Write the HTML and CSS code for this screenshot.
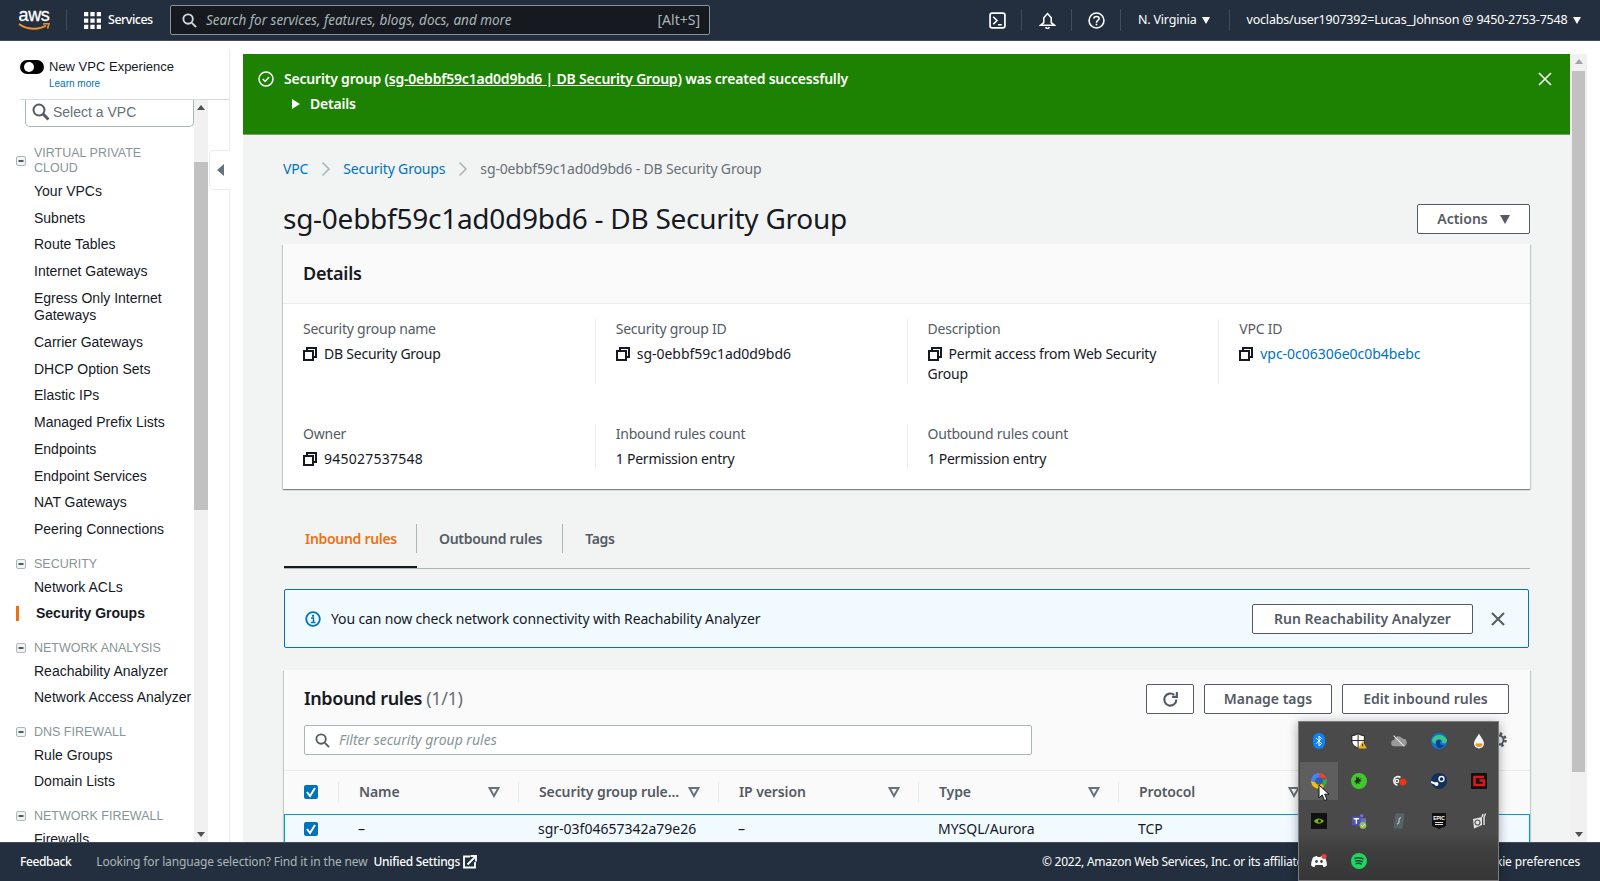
FILE: index.html
```html
<!DOCTYPE html>
<html lang="en">
<head>
<meta charset="utf-8">
<title>sg-0ebbf59c1ad0d9bd6 - DB Security Group</title>
<link rel="stylesheet" href="styles.css">
</head>
<body>
<svg class="defs" width="0" height="0" aria-hidden="true">
  <symbol id="copy" viewBox="0 0 14 14"><path d="M4 3.8V1h9v9h-3M1 4h9v9H1z" fill="#fff" stroke="#16191f" stroke-width="2"/></symbol>
  <symbol id="filter" viewBox="0 0 12 12"><path d="M1.5 2h9L6 10z" fill="none" stroke="#687078" stroke-width="2"/></symbol>
  <symbol id="minus" viewBox="0 0 10 10"><rect x=".5" y=".5" width="9" height="9" rx="1.5" fill="#f2f3f3" stroke="#aab7b8"/><rect x="2.5" y="4" width="5" height="2" fill="#545b64"/></symbol>
  <symbol id="check" viewBox="0 0 14 14"><rect width="14" height="14" rx="2" fill="#0073bb"/><path d="M3 7l3 4 5-8" fill="none" stroke="#fff" stroke-width="2"/></symbol>
  <symbol id="chev" viewBox="0 0 10 16"><path d="M1.5 1.5L8 8l-6.500 6.500" fill="none" stroke="#aab7b8" stroke-width="1.600"/></symbol>
</svg>

<header class="topbar">
  <div class="logo">
    <span class="logo-text">aws</span>
    <svg class="logo-smile" viewBox="0 0 32 8"><path d="M1 1c8 6 20 6 27 1.500" fill="none" stroke="#ec912d" stroke-width="2"/><path d="M25 1l6-.5-1.500 5" fill="none" stroke="#ec912d" stroke-width="1.600"/></svg>
  </div>
  <span class="top-div logo-div"></span>
  <svg class="grid-ico" viewBox="0 0 16 16"><path d="M0 0h4v4H0zM6 0h4v4H6zM12 0h4v4h-4zM0 6h4v4H0zM6 6h4v4H6zM12 6h4v4h-4zM0 12h4v4H0zM6 12h4v4H6zM12 12h4v4h-4z" fill="#fff"/></svg>
  <span class="services">Services</span>
  <div class="search">
    <svg class="search-ico" viewBox="0 0 16 16"><circle cx="6.500" cy="6.500" r="5" fill="none" stroke="#d5dbdb" stroke-width="2"/><path d="M10.500 10.500L15 15" stroke="#d5dbdb" stroke-width="2"/></svg>
    <span class="search-text">Search for services, features, blogs, docs, and more</span>
    <span class="search-key">[Alt+S]</span>
  </div>
  <svg class="top-ico term" viewBox="0 0 16 16"><rect x="1" y="1" width="14" height="14" rx="2" fill="none" stroke="#fff" stroke-width="1.600"/><path d="M4 4.500L7.500 8 4 11.500M8.500 12H12" fill="none" stroke="#fff" stroke-width="1.500"/></svg>
  <span class="top-div d1"></span>
  <svg class="top-ico bell" viewBox="0 0 16 16"><path d="M8 1.500L11.500 5.500V10L14.500 12.500H1.500L4.500 10V5.500z" fill="none" stroke="#fff" stroke-width="1.500"/><path d="M6.500 14a1.500 1.500 0 0 0 3 0" fill="none" stroke="#fff" stroke-width="1.500"/></svg>
  <span class="top-div d2"></span>
  <svg class="top-ico help" viewBox="0 0 16 16"><circle cx="8" cy="8" r="7" fill="none" stroke="#fff" stroke-width="1.500"/><path d="M5.500 6.200C5.500 3.500 10.500 3.500 10.500 6.200 10.500 8 8 8 8 10" fill="none" stroke="#fff" stroke-width="1.500"/><rect x="7.200" y="11" width="1.600" height="1.600" fill="#fff"/></svg>
  <span class="top-div d3"></span>
  <span class="region">N. Virginia</span><span class="tri-w region-tri"></span>
  <span class="top-div d4"></span>
  <span class="user">voclabs/user1907392=Lucas_Johnson @ 9450-2753-7548</span><span class="tri-w user-tri"></span>
</header>

<div class="body">
  <aside class="side">
    <div class="side-top">
      <span class="toggle"><i></i></span>
      <div>
        <div class="exp">New VPC Experience</div>
        <a class="learn">Learn more</a>
      </div>
    </div>
    <div class="nav-row">
      <div class="nav-col">
        <div class="vpc-box">
          <svg class="vpc-ico" viewBox="0 0 18 18"><circle cx="7" cy="7" r="5.500" fill="none" stroke="#545b64" stroke-width="2"/><path d="M11 11l5.500 5.500" stroke="#545b64" stroke-width="3"/></svg>
          <span>Select a VPC</span>
        </div>
        <section class="sec first">
          <div class="sec-head"><svg class="minus"><use href="#minus"/></svg><span>VIRTUAL PRIVATE CLOUD</span></div>
          <a class="item">Your VPCs</a>
          <a class="item">Subnets</a>
          <a class="item">Route Tables</a>
          <a class="item">Internet Gateways</a>
          <a class="item">Egress Only Internet Gateways</a>
          <a class="item">Carrier Gateways</a>
          <a class="item">DHCP Option Sets</a>
          <a class="item">Elastic IPs</a>
          <a class="item">Managed Prefix Lists</a>
          <a class="item">Endpoints</a>
          <a class="item">Endpoint Services</a>
          <a class="item">NAT Gateways</a>
          <a class="item">Peering Connections</a>
        </section>
        <section class="sec">
          <div class="sec-head"><svg class="minus"><use href="#minus"/></svg><span>SECURITY</span></div>
          <a class="item">Network ACLs</a>
          <a class="item active">Security Groups</a>
        </section>
        <section class="sec">
          <div class="sec-head"><svg class="minus"><use href="#minus"/></svg><span>NETWORK ANALYSIS</span></div>
          <a class="item">Reachability Analyzer</a>
          <a class="item nowrap">Network Access Analyzer</a>
        </section>
        <section class="sec">
          <div class="sec-head"><svg class="minus"><use href="#minus"/></svg><span>DNS FIREWALL</span></div>
          <a class="item">Rule Groups</a>
          <a class="item">Domain Lists</a>
        </section>
        <section class="sec">
          <div class="sec-head"><svg class="minus"><use href="#minus"/></svg><span>NETWORK FIREWALL</span></div>
          <a class="item">Firewalls</a>
        </section>
      </div>
      <div class="sbar side-sbar">
        <span class="arr-up"></span>
        <div class="side-thumb"></div>
        <span class="arr-down"></span>
      </div>
    </div>
    <div class="handle"><i></i></div>
  </aside>

  <main class="main">
    <div class="content">
      <div class="banner">
        <div class="banner-row">
          <svg class="ok-ico" viewBox="0 0 16 16"><circle cx="8" cy="8" r="7" fill="none" stroke="#fff" stroke-width="1.500"/><path d="M4.800 8l2.300 2.500 4-4.500" fill="none" stroke="#fff" stroke-width="1.500"/></svg>
          <span>Security group (<a class="banner-link">sg-0ebbf59c1ad0d9bd6 | DB Security Group</a>) was created successfully</span>
          <svg class="banner-x" viewBox="0 0 14 14"><path d="M1 1l12 12M13 1L1 13" stroke="#fff" stroke-width="1.600"/></svg>
        </div>
        <div class="banner-row sub"><span class="tri-r"></span><span>Details</span></div>
      </div>

      <nav class="crumbs">
        <a class="link">VPC</a><svg class="chev"><use href="#chev"/></svg>
        <a class="link">Security Groups</a><svg class="chev"><use href="#chev"/></svg>
        <span class="crumb-cur">sg-0ebbf59c1ad0d9bd6 - DB Security Group</span>
      </nav>

      <div class="title-row">
        <h1>sg-0ebbf59c1ad0d9bd6 - DB Security Group</h1>
        <button class="btn actions">Actions<span class="tri-d"></span></button>
      </div>

      <section class="card details">
        <div class="card-head"><h2>Details</h2></div>
        <div class="fields">
          <div class="field"><div class="lab">Security group name</div><div class="val"><svg class="copy"><use href="#copy"/></svg>DB Security Group</div></div>
          <div class="field"><div class="lab">Security group ID</div><div class="val"><svg class="copy"><use href="#copy"/></svg><span class="id">sg-0ebbf59c1ad0d9bd6</span></div></div>
          <div class="field"><div class="lab">Description</div><div class="val"><svg class="copy"><use href="#copy"/></svg>Permit access from Web Security Group</div></div>
          <div class="field"><div class="lab">VPC ID</div><div class="val"><svg class="copy"><use href="#copy"/></svg><a class="link id">vpc-0c06306e0c0b4bebc</a></div></div>
          <div class="field short"><div class="lab">Owner</div><div class="val"><svg class="copy"><use href="#copy"/></svg><span class="num">945027537548</span></div></div>
          <div class="field short"><div class="lab">Inbound rules count</div><div class="val">1 Permission entry</div></div>
          <div class="field short"><div class="lab">Outbound rules count</div><div class="val">1 Permission entry</div></div>
        </div>
      </section>

      <div class="tabs">
        <div class="tab on"><span class="tab-l">Inbound rules</span></div>
        <div class="tab"><span class="tab-l">Outbound rules</span></div>
        <div class="tab"><span class="tab-l last">Tags</span></div>
      </div>

      <div class="info">
        <svg class="info-ico" viewBox="0 0 16 16"><circle cx="8" cy="8" r="6.800" fill="none" stroke="#0073bb" stroke-width="1.800"/><rect x="7" y="3.800" width="2" height="2" fill="#0073bb"/><path d="M6 7h2.500v4M6 11.500h4.500" fill="none" stroke="#0073bb" stroke-width="1.500"/></svg>
        <span class="info-text">You can now check network connectivity with Reachability Analyzer</span>
        <button class="btn run">Run Reachability Analyzer</button>
        <svg class="info-x" viewBox="0 0 14 14"><path d="M1 1l12 12M13 1L1 13" stroke="#545b64" stroke-width="2"/></svg>
      </div>

      <section class="card rules">
        <div class="rules-head">
          <h2>Inbound rules <span class="count">(1/1)</span></h2>
          <div class="rules-btns">
            <button class="btn refresh"><svg viewBox="0 0 16 16"><path d="M13.500 8a5.700 5.700 0 1 1-2-4.300" fill="none" stroke="#545b64" stroke-width="2"/><path d="M14 1v4.500H9.500" fill="none" stroke="#545b64" stroke-width="2"/></svg></button>
            <button class="btn tags">Manage tags</button>
            <button class="btn edit">Edit inbound rules</button>
          </div>
        </div>
        <div class="filter-row">
          <div class="filter">
            <svg viewBox="0 0 16 16"><circle cx="6.500" cy="6.500" r="5" fill="none" stroke="#545b64" stroke-width="2"/><path d="M10.500 10.500L15 15" stroke="#545b64" stroke-width="2"/></svg>
            <span>Filter security group rules</span>
          </div>
        </div>
        <div class="thead">
          <div class="cbox"><svg class="check"><use href="#check"/></svg></div>
          <div class="th">Name<svg class="flt"><use href="#filter"/></svg></div>
          <div class="th">Security group rule...<svg class="flt"><use href="#filter"/></svg></div>
          <div class="th">IP version<svg class="flt"><use href="#filter"/></svg></div>
          <div class="th">Type<svg class="flt"><use href="#filter"/></svg></div>
          <div class="th">Protocol<svg class="flt"><use href="#filter"/></svg></div>
          <div class="th">Port range</div>
        </div>
        <div class="trow">
          <div class="cbox"><svg class="check"><use href="#check"/></svg></div>
          <div class="td">–</div>
          <div class="td">sgr-03f04657342a79e26</div>
          <div class="td">–</div>
          <div class="td">MYSQL/Aurora</div>
          <div class="td">TCP</div>
          <div class="td">3306</div>
        </div>
      </section>
    </div>
    <div class="sbar main-sbar">
      <span class="arr-up"></span>
      <div class="main-thumb"></div>
      <span class="arr-down"></span>
    </div>
  </main>
</div>

<footer class="foot">
  <span class="foot-fb">Feedback</span>
  <span class="foot-q">Looking for language selection? Find it in the new</span>
  <span class="foot-us">Unified Settings</span>
  <svg class="foot-ext" viewBox="0 0 14 14"><path d="M7 1.500H1v11h11V7" fill="none" stroke="#fff" stroke-width="1.800"/><path d="M4.500 9.500L12 2M7.500 1h5.500v5.500" fill="none" stroke="#fff" stroke-width="1.800"/></svg>
  <div class="foot-r">
    <span class="foot-copy">© 2022, Amazon Web Services, Inc. or its affiliates.</span>
    <span>Privacy</span>
    <span>Terms</span>
    <span>Cookie preferences</span>
  </div>
</footer>

<svg class="gear" viewBox="0 0 16 16"><circle cx="8" cy="8" r="4.500" fill="none" stroke="#545b64" stroke-width="2"/><circle cx="8" cy="8" r="6.500" fill="none" stroke="#545b64" stroke-width="2.500" stroke-dasharray="2.500 2.600"/></svg>

<div class="tray">
  <div class="tray-cell">
    <svg viewBox="0 0 16 16"><rect x="2" y="0" width="12" height="16" rx="6" fill="#0a84ff"/><path d="M5.200 5.200L10.500 10.500 8 13V3l2.500 2.500L5.200 10.800" fill="none" stroke="#fff"/></svg>
  </div>
  <div class="tray-cell">
    <svg viewBox="0 0 18 18"><path d="M1 3c3 0 5-1 7-2.500C10 2 12 3 15 3v6c0 4-3 6-7 8-4-2-7-4-7-8z" fill="#fff" stroke="#111"/><path d="M8 1v15M1 8.500h14" stroke="#111"/><path d="M13 9l4.800 8.500H8.200z" fill="#f7b500"/><rect x="12.600" y="12" width="1" height="3" fill="#111"/></svg>
  </div>
  <div class="tray-cell">
    <svg viewBox="0 0 18 14"><path d="M4 13a3.500 3.500 0 0 1-.5-7A5 5 0 0 1 13 4.500 4 4 0 0 1 14 13z" fill="#9a9a9a"/><path d="M3 1l12 12" stroke="#e8e8e8" stroke-width="1.200"/></svg>
  </div>
  <div class="tray-cell">
    <svg viewBox="0 0 16 16"><circle cx="8" cy="8" r="8" fill="#0c78d4"/><path d="M1 7C3 1 13 0 16 7c.5 3-3 4-5 3 1-2-1-4-4-3.500C5 7 4 9 4.500 11 2.500 10 1 9 1 7z" fill="#39c58d"/><path d="M5 10c0-3 3.500-4 5.500-2.500-1 .5-2 1.500-1.500 3 .5 1.500 3 2 5 1-2 3-5 4-7 3-1.500-1-2-3-2-4.500z" fill="#0a3f8a"/></svg>
  </div>
  <div class="tray-cell">
    <svg viewBox="0 0 12 16"><path d="M6 .5C7 3 11 7 11 10.500a5 5 0 0 1-10 0C1 7 5 3 6 .5z" fill="#f4f4f4"/><path d="M2.500 10.500h7a3.500 3.500 0 0 1-7 0z" fill="#e8912d"/></svg>
  </div>
  <div class="tray-cell hot">
    <svg viewBox="0 0 16 16"><path d="M8 0a8 8 0 0 1 7.500 5.200L8 5z" fill="#ea4335"/><path d="M0 8a8 8 0 0 1 8-8v5L3 9 0 8z" fill="#4285f4"/><path d="M15.500 5.200A8 8 0 0 1 16 8a8 8 0 0 1-3 6L10 9z" fill="#34a853"/><path d="M13 14a8 8 0 0 1-13-6l3 1 7 0z" fill="#fbbc05"/><circle cx="8" cy="8" r="3.700" fill="#2a5fb0"/></svg>
    <svg class="cursor" viewBox="0 0 12 18"><path d="M1 1v13l3.200-3 2.300 5.500 2.500-1-2.300-5.300h4.300z" fill="#fff" stroke="#111"/></svg>
  </div>
  <div class="tray-cell">
    <svg viewBox="0 0 16 16"><circle cx="8" cy="8" r="8" fill="#44c62f"/><path d="M5 3l1 2 2-1 0 2 3-1-2 2 2 1-3 1 1 2-3-1-1 2-.5-3L3 8l2-1z" fill="#173a17"/></svg>
  </div>
  <div class="tray-cell">
    <svg viewBox="0 0 16 12"><path d="M9.500 2.500A4.200 4.200 0 1 0 6.500 10" fill="none" stroke="#f4f4f4" stroke-width="1.600"/><circle cx="6" cy="6" r="1.700" fill="none" stroke="#f4f4f4" stroke-width="1.200"/><circle cx="12" cy="7" r="3.500" fill="#e8380d"/></svg>
  </div>
  <div class="tray-cell">
    <svg viewBox="0 0 16 16"><circle cx="8" cy="8" r="8" fill="#12305a"/><circle cx="10.500" cy="6" r="2.500" fill="none" stroke="#fff" stroke-width="1.300"/><path d="M0 9l5 2" stroke="#fff" stroke-width="2"/><circle cx="5.500" cy="11" r="2" fill="#fff"/></svg>
  </div>
  <div class="tray-cell">
    <svg viewBox="0 0 16 16"><rect width="16" height="16" rx="1" fill="#111"/><path d="M13 4H3.500v8H13V7.500H8.500" fill="none" stroke="#d71920" stroke-width="2.600"/></svg>
  </div>
  <div class="tray-cell">
    <svg viewBox="0 0 16 16"><rect width="16" height="16" fill="#111"/><path d="M3 8c2-3.500 7-3.500 10 0-3 3.500-8 3.500-10 0z" fill="#76b900"/><circle cx="8.500" cy="8" r="1.500" fill="#111"/></svg>
  </div>
  <div class="tray-cell">
    <svg viewBox="0 0 18 18"><circle cx="12" cy="3" r="2" fill="#6b70c4"/><path d="M9 6h8v6a3 3 0 0 1-6 0z" fill="#6b70c4"/><rect x="1" y="4" width="10" height="10" rx="1" fill="#4b53bc"/><path d="M3 6.500h6M6 6.500V12" stroke="#fff" stroke-width="1.500"/><circle cx="13.500" cy="14" r="3.800" fill="#92c353"/><path d="M11.800 14l1.300 1.300 2.300-2.500" fill="none" stroke="#fff"/></svg>
  </div>
  <div class="tray-cell">
    <svg viewBox="0 0 12 16"><path d="M3 1h8L9 15H1z" fill="#566467" stroke="#566467" stroke-width="1" stroke-linejoin="round"/><path d="M8 5C6 4 6 7 6 8s0 3-2 3" fill="none" stroke="#e8e8e8"/></svg>
  </div>
  <div class="tray-cell">
    <svg viewBox="0 0 14 16"><path d="M0 0h14v13l-7 3-7-3z" fill="#111"/><text class="epic" x="7" y="7">EPIC</text><rect x="3" y="9" width="8" height="1" fill="#ddd"/><rect x="3" y="11" width="8" height="1" fill="#ddd"/></svg>
  </div>
  <div class="tray-cell">
    <svg viewBox="0 0 16 16"><path d="M2 6l9-2v8l-8 3.500z" fill="#e4e4e4"/><circle cx="6.500" cy="9.500" r="2.500" fill="none" stroke="#555" stroke-width="1.200"/><path d="M11 4l1-3M13 4l1.500-3.500M13 4v8" fill="none" stroke="#e4e4e4" stroke-width="1.400"/></svg>
  </div>
  <div class="tray-cell">
    <svg viewBox="0 0 16 14"><path d="M2 3.500C4 2 6 2 6 2l.5 1h3l.5-1s2 0 4 1.500c1.500 3 2 6 1.800 8-1 1-2.500 1.500-3.300 1.500L11.500 11h-7L3.500 13C2.700 13 1.200 12.500.2 11.500 0 9.500.5 6.500 2 3.500z" fill="#fff"/><circle cx="5.500" cy="7.500" r="1.400" fill="#4a4a4a"/><circle cx="10.500" cy="7.500" r="1.400" fill="#4a4a4a"/><circle cx="13" cy="2.500" r="2.500" fill="#f23f43"/></svg>
  </div>
  <div class="tray-cell">
    <svg viewBox="0 0 16 16"><circle cx="8" cy="8" r="8" fill="#1ed760"/><path d="M3.500 5.500c3-1 6.500-.8 9 .7M4 8.200c2.700-.8 5.500-.6 7.800.7M4.500 10.700c2.200-.6 4.500-.5 6.500.6" fill="none" stroke="#143" stroke-width="1.400"/></svg>
  </div>
</div>
</body>
</html>
```

FILE: styles.css
```css
* { box-sizing: border-box; }
html, body { margin: 0; padding: 0; height: 881px; overflow: hidden; background: #fff; }
body { display: flex; flex-direction: column; font: 14px/20px "Noto Sans", "Open Sans", sans-serif; color: #16191f; }
.defs { position: absolute; }
h1, h2 { margin: 0; font-weight: 400; }

/* top bar */
.topbar { flex: 0 0 41px; display: flex; align-items: center; background: #232f3e; border-bottom: 1px solid #414d5c; color: #fff; font-size: 13px; }
.logo { width: 32px; margin-left: 18px; position: relative; height: 28px; }
.logo-text { display: block; font: 400 18px/18px "Liberation Sans", sans-serif; -webkit-text-stroke: .3px #fff; letter-spacing: -.3px; text-align: center; }
.logo-smile { display: block; width: 32px; height: 8px; margin-top: -1px; }
.top-div { width: 1px; height: 22px; background: #414d5c; flex: none; }
.logo-div { margin-left: 16px; }
.grid-ico { width: 17px; height: 17px; margin-left: 17px; flex: none; }
.services { margin-left: 7px; width: 62px; font-size: 12.500px; font-weight: 500; letter-spacing: -.5px; }
.search { width: 540px; height: 30px; display: flex; align-items: center; background: #16191f; border: 1px solid #879596; border-radius: 2px; }
.search-ico { width: 15px; height: 15px; margin-left: 11px; flex: none; }
.search-text { margin-left: 9px; flex: 1; font-style: italic; font-size: 13.500px; color: #aab7b8; }
.search-key { margin-right: 9px; color: #aab7b8; font-size: 14px; }
.top-ico { width: 17px; height: 17px; flex: none; }
.term { margin-left: 279px; }
.d1 { margin-left: 15px; }
.bell { margin-left: 17px; }
.d2 { margin-left: 15px; }
.help { margin-left: 16px; }
.d3 { margin-left: 15px; }
.region { margin-left: 17px; font-size: 12.500px; letter-spacing: -.2px; }
.tri-w { width: 0; height: 0; border: 4px solid transparent; border-top: 7px solid #fff; border-bottom: 0; flex: none; }
.region-tri { margin-left: 5px; }
.d4 { margin-left: 19px; }
.user { margin-left: 17px; font-size: 12.500px; letter-spacing: -.2px; white-space: nowrap; }
.user-tri { margin-left: 6px; }

/* body */
.body { flex: 1; min-height: 0; display: flex; }

/* sidebar */
.side { flex: 0 0 243px; position: relative; background: #fff; overflow: hidden; font-family: "Liberation Sans", Arial, sans-serif; display: flex; flex-direction: column; }
.side-top { flex: none; margin: 9px 0 0 20px; width: 210px; height: 50px; border-bottom: 1px solid #d5dbdb; border-right: 1px solid #eaeded; display: flex; }
.toggle { width: 24px; height: 14px; margin-top: 10px; border-radius: 7px; background: #000; display: block; flex: none; padding: 2px 0 0 4px; }
.toggle i { display: block; width: 10px; height: 10px; border-radius: 5px; background: #fff; }
.exp { margin: 7px 0 0 5px; font-size: 13px; line-height: 20px; color: #16191f; }
.learn { display: block; margin: 0 0 0 5px; font-size: 10px; line-height: 14px; color: #0073bb; }
.nav-row { flex: 1; min-height: 0; width: 230px; display: flex; border-right: 1px solid #eaeded; }
.nav-col { width: 194px; flex: none; overflow: hidden; }
.vpc-box { margin-left: 25px; width: 169px; height: 27px; padding-bottom: 2px; display: flex; align-items: center; border: 1px solid #aab7b8; border-top: 0; border-radius: 0 0 5px 5px; font-size: 14px; color: #687078; }
.vpc-ico { width: 18px; height: 18px; margin-left: 6px; margin-right: 3px; flex: none; }
.sec { margin-top: 13.500px; }
.sec.first { margin-top: 19px; }
.sec-head { display: flex; align-items: center; font-size: 12.500px; line-height: 15px; color: #879596; margin-bottom: 2px; padding-left: 16px; }
.sec-head span { margin-left: 8px; width: 132px; }
.minus { width: 10px; height: 10px; flex: none; }
.item { display: block; padding: 4.900px 0 4.900px 34px; line-height: 17px; color: #16191f; }
.item.nowrap { white-space: nowrap; }
.item.active { position: relative; font-weight: 700; padding-left: 36px; }
.item.active::before { content: ""; position: absolute; left: 16px; top: 6px; width: 3px; height: 15px; background: #ec7211; }
.sbar { background: #f1f1f1; position: relative; flex: none; }
.side-sbar { width: 14px; }
.side-thumb { position: absolute; left: 0; right: 0; top: 62px; height: 348px; background: #c1c1c1; }
.arr-up, .arr-down { position: absolute; left: 50%; margin-left: -4px; width: 0; height: 0; border: 4px solid transparent; }
.arr-up { top: 5px; border-top: 0; border-bottom: 5px solid #505050; }
.arr-down { bottom: 5px; border-bottom: 0; border-top: 5px solid #505050; }
.handle { position: absolute; left: 209px; top: 109px; width: 22px; height: 40px; background: #fff; border: 1px solid #eaeded; border-right-color: #fff; border-radius: 5px 0 0 5px; }
.handle i { display: block; width: 0; height: 0; margin: 13px 0 0 7px; border: 6px solid transparent; border-left: 0; border-right: 7px solid #687078; }

/* main */
.main { flex: 1; min-width: 0; display: flex; padding-top: 13px; overflow: hidden; }
.content { width: 1327px; flex: none; background: #f2f3f3; padding: 0 40px; overflow: hidden; }
.main-sbar { width: 17px; }
.main-thumb { position: absolute; left: 2px; right: 2px; top: 17px; height: 701px; background: #c1c1c1; }
.main-sbar .arr-up { border-bottom-color: #a3a3a3; }
.banner { margin: 0 -40px; height: 81px; padding: 12px 0 0 15px; background: #1d8102; border-bottom: 1px solid #7d9a74; color: #fff; font-weight: 600; letter-spacing: -.2px; }
.banner-row { display: flex; align-items: center; height: 25px; position: relative; }
.banner-row.sub { padding-left: 34px; }
.ok-ico { width: 16px; height: 16px; margin: 0 10px 0 0; flex: none; }
.banner-link { color: #fff; text-decoration: underline; }
.banner-x { position: absolute; right: 18px; top: 6px; width: 14px; height: 14px; }
.tri-r { width: 0; height: 0; border: 5px solid transparent; border-left: 8px solid #fff; border-right: 0; margin-right: 10px; }
.crumbs { margin-top: 24px; height: 20px; display: flex; align-items: center; letter-spacing: -.15px; }
.link { color: #0073bb; }
.chev { width: 10px; height: 16px; margin: 0 12px 0 13px; }
.crumb-cur { color: #687078; }
.title-row { margin-top: 25px; height: 30px; display: flex; justify-content: space-between; align-items: center; }
h1 { font-size: 28px; line-height: 30px; padding-bottom: 2px; letter-spacing: -.26px; color: #16191f; }
.btn { display: flex; align-items: center; justify-content: center; height: 30px; padding: 0; font: 600 14px/20px "Noto Sans", sans-serif; color: #545b64; background: #fff; border: 1px solid #545b64; border-radius: 2px; }
.actions { width: 113px; }
.tri-d { margin-left: 12px; width: 0; height: 0; border: 5.500px solid transparent; border-top: 9px solid #545b64; border-bottom: 0; }
.card { background: #fff; box-shadow: 0 1px 1px 0 rgba(0,28,36,.3), 1px 1px 1px 0 rgba(0,28,36,.15), -1px 1px 1px 0 rgba(0,28,36,.15); }
.details { margin-top: 10px; height: 245px; }
.card-head { height: 60px; padding: 20px 20px 0; background: #fafafa; border-bottom: 1px solid #eaeded; }
.card-head h2 { font-size: 18px; line-height: 19px; font-weight: 600; letter-spacing: -.3px; }
.fields { display: grid; grid-template-columns: repeat(4, 1fr); padding-top: 15px; row-gap: 40px; }
.field { height: 65px; padding: 0 20px; border-left: 1px solid #eaeded; letter-spacing: -.23px; }
.field:nth-child(4n+1) { border-left: 0; }
.field.short { height: 45px; }
.lab { color: #545b64; line-height: 20px; }
.val { margin-top: 5px; line-height: 20px; }
.id { letter-spacing: -.03px; }
.num { letter-spacing: .25px; }
.copy { width: 14px; height: 14px; margin-right: 7px; vertical-align: -2px; }
.tabs { margin-top: 35px; margin-left: 1px; display: flex; border-bottom: 1px solid #aab7b8; height: 45px; letter-spacing: -.3px; }
.tab { height: 44px; padding-bottom: 13px; border-bottom: 2px solid transparent; font-weight: 600; color: #545b64; }
.tab.on { border-bottom-color: #16191f; color: #ec7211; }
.tab-l { display: flex; align-items: center; height: 29px; padding: 0 20px 0 22px; border-right: 1px solid #aab7b8; }
.tab.on .tab-l { padding: 0 19px 0 21px; }
.tab-l.last { border-right: 0; }
.info { margin: 20px 1px 0 1px; height: 59px; display: flex; align-items: center; background: #f1faff; border: 1px solid #0073bb; border-radius: 2px; padding-left: 20px; }
.info-ico { width: 16px; height: 16px; flex: none; margin-right: 10px; }
.info-text { flex: 1; letter-spacing: -.15px; }
.run { width: 221px; }
.info-x { width: 14px; height: 14px; margin: 0 23px 0 18px; flex: none; }
.rules { margin: 22px 0 0 1px; height: 240px; background: #fafafa; overflow: hidden; }
.rules-head { display: flex; justify-content: space-between; padding: 14px 21px 0 20px; height: 44px; }
.rules-head h2 { font-size: 18px; line-height: 28px; font-weight: 600; letter-spacing: -.4px; }
.count { font-weight: 400; color: #687078; }
.rules-btns { display: flex; gap: 10px; }
.refresh { width: 48px; }
.refresh svg { width: 17px; height: 17px; }
.tags { width: 128px; }
.edit { width: 167px; }
.filter-row { margin-top: 11px; padding: 0 20px 15px; border-bottom: 1px solid #eaeded; }
.filter { width: 728px; height: 30px; display: flex; align-items: center; background: #fff; border: 1px solid #aab7b8; border-radius: 2px; font-style: italic; color: #879596; }
.filter svg { width: 15px; height: 15px; margin: 0 9px 0 10px; }
.thead, .trow { display: grid; grid-template-columns: 54px 180px repeat(5, 200px); align-items: center; }
.thead { width: 1254px; height: 43px; padding-bottom: 1px; font-weight: 600; color: #545b64; letter-spacing: -.1px; }
.trow { height: 40px; padding-bottom: 12px; border: 1px solid #00a1c9; border-width: 1px 1px 0; background: #f1faff; width: 1246px; overflow: hidden; }
.cbox { padding-left: 20px; display: flex; }
.trow .cbox { padding-left: 19px; }
.check { width: 14px; height: 14px; }
.th { display: flex; align-items: center; justify-content: space-between; height: 21px; padding: 0 18px 0 20px; border-left: 1px solid #eaeded; white-space: nowrap; }
.flt { width: 12px; height: 12px; flex: none; }
.td { padding-left: 19px; white-space: nowrap; }

/* footer */
.foot { flex: 0 0 39px; display: flex; align-items: center; background: #232f3e; border-top: 1px solid #414d5c; color: #fff; font-size: 12px; letter-spacing: -.15px; position: relative; }
.foot-fb { margin-left: 20px; font-weight: 500; letter-spacing: -.4px; }
.foot-q { margin-left: 25px; color: #aab7b8; }
.foot-us { margin-left: 6px; font-weight: 500; letter-spacing: -.3px; }
.foot-ext { width: 14px; height: 14px; margin-left: 3px; }
.foot-r { margin-left: auto; margin-right: 20px; width: 538px; display: flex; gap: 20px; white-space: nowrap; }
.foot-copy { flex: 1; letter-spacing: -.25px; }

/* overlays */
.gear { position: absolute; left: 1491px; top: 732px; width: 16px; height: 16px; }
.tray { position: absolute; left: 1298px; top: 721px; width: 201px; height: 160px; background: linear-gradient(#4a4a4a 0, #4a4a4a 70%, #3f3f3f 80%, #363636 100%); box-shadow: inset 0 0 0 1px #7c7c7c, 0 2px 10px rgba(0,0,0,.35); display: grid; grid-template-columns: repeat(5, 40px); grid-auto-rows: 40px; justify-content: center; }
.tray-cell { display: flex; align-items: center; justify-content: center; position: relative; }
.tray-cell svg { width: 16px; height: 16px; }
.tray-cell.hot { background: #5e5e5e; margin: 1px; }
.tray-cell .cursor { position: absolute; left: 18px; top: 22px; width: 12px; height: 18px; }
.epic { font: 700 5px "Liberation Sans", sans-serif; fill: #fff; text-anchor: middle; }
```
